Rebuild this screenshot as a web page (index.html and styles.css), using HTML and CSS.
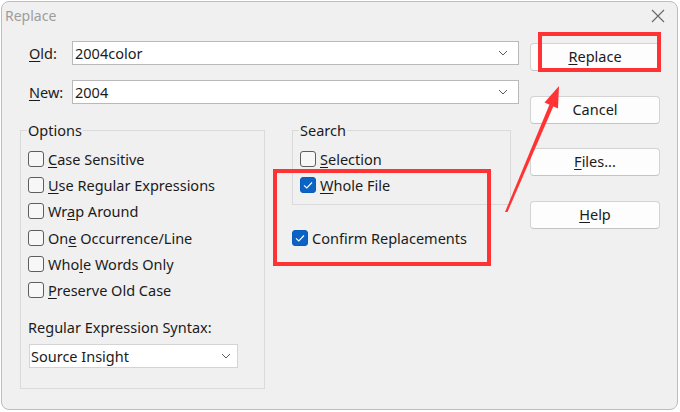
FILE: index.html
```html
<!DOCTYPE html>
<html lang="en">
<head>
    <meta charset="UTF-8">
    <meta name="viewport" content="width=device-width, initial-scale=1.0">
    <title>Replace</title>
    <link rel="stylesheet" href="styles.css">
</head>
<body>
    <div class="window">
        <div class="titlebar">
            <span class="title">Replace</span>
            <svg class="close" width="14" height="14" viewBox="0 0 14 14">
                <path d="M1 1 L13 13 M13 1 L1 13" stroke="#6b6b6b" stroke-width="1.2" fill="none"/>
            </svg>
        </div>

        <div class="dialog-body">
            <div class="main">
                <div class="field">
                    <label><u>O</u>ld:</label>
                    <div class="combo">
                        <span>2004color</span>
                        <svg class="chevron" width="10" height="6" viewBox="0 0 10 6"><path d="M1 1 L5 5 L9 1" stroke="#5c5c5c" stroke-width="1" fill="none"/></svg>
                    </div>
                </div>
                <div class="field">
                    <label><u>N</u>ew:</label>
                    <div class="combo">
                        <span>2004</span>
                        <svg class="chevron" width="10" height="6" viewBox="0 0 10 6"><path d="M1 1 L5 5 L9 1" stroke="#5c5c5c" stroke-width="1" fill="none"/></svg>
                    </div>
                </div>

                <div class="groups">
                    <fieldset class="options">
                        <legend>Options</legend>
                        <div class="check"><span class="box"></span><span><u>C</u>ase Sensitive</span></div>
                        <div class="check"><span class="box"></span><span><u>U</u>se Regular Expressions</span></div>
                        <div class="check"><span class="box"></span><span>Wr<u>a</u>p Around</span></div>
                        <div class="check"><span class="box"></span><span>On<u>e</u> Occurrence/Line</span></div>
                        <div class="check"><span class="box"></span><span>Who<u>l</u>e Words Only</span></div>
                        <div class="check"><span class="box"></span><span><u>P</u>reserve Old Case</span></div>
                        <div class="syntax-label">Re<u>g</u>ular Expression Syntax:</div>
                        <div class="select">
                            <span>Source Insight</span>
                            <svg class="chevron" width="10" height="6" viewBox="0 0 10 6"><path d="M1 1 L5 5 L9 1" stroke="#5c5c5c" stroke-width="1" fill="none"/></svg>
                        </div>
                    </fieldset>

                    <div class="search-col">
                        <fieldset class="search">
                            <legend>Search</legend>
                            <div class="check"><span class="box"></span><span><u>S</u>election</span></div>
                            <div class="check"><span class="box checked"></span><span><u>W</u>hole File</span></div>
                        </fieldset>
                        <div class="check confirm"><span class="box checked"></span><span>Conf<u>i</u>rm Replacements</span></div>
                    </div>
                </div>
            </div>

            <div class="buttons">
                <div class="btn"><u>R</u>eplace</div>
                <div class="btn">Cancel</div>
                <div class="btn"><u>F</u>iles...</div>
                <div class="btn"><u>H</u>elp</div>
            </div>
        </div>

        <!-- annotation marks drawn over the dialog -->
        <div class="mark mark-replace"></div>
        <div class="mark mark-checks"></div>
        <svg class="arrow" width="680" height="412" viewBox="0 0 680 412">
            <polygon points="505,212 507.5,212 553.5,106 549.5,104.5" fill="#ff3333"/>
            <polygon points="559,86 544.5,102.5 558,108.5" fill="#ff3333"/>
        </svg>
    </div>
</body>
</html>
```

FILE: styles.css
```css
body {
    margin: 0;
    background-color: #fff;
    font-family: "Noto Sans", "Open Sans", sans-serif;
    font-size: 14.5px;
    color: #1b1b1b;
}
u {
    text-underline-offset: 2px;
}
.window {
    position: relative;
    box-sizing: border-box;
    margin: 1px 0 0 1px;
    width: 677px;
    height: 409px;
    background-color: #f0f0f0;
    border: 1px solid #bdbdbd;
    border-radius: 8px;
    overflow: hidden;
}
.titlebar {
    display: flex;
    justify-content: space-between;
    align-items: center;
    height: 27px;
    padding: 0 12px 0 3px;
}
.title {
    font-size: 14px;
    color: #9d9d9d;
}
.dialog-body {
    display: flex;
    gap: 11px;
    padding: 12px 0 0 18px;
}
.main {
    width: 499px;
}
.field {
    display: flex;
    align-items: center;
    height: 24px;
    margin-bottom: 15px;
    padding-left: 9px;
}
.field label {
    width: 43px;
}
.combo, .select {
    box-sizing: border-box;
    display: flex;
    justify-content: space-between;
    align-items: center;
    height: 24px;
    background-color: #fff;
    border: 1px solid #b9b9b9;
    line-height: 20px;
}
.combo {
    width: 447px;
    padding: 0 10px 0 2px;
}
.select {
    width: 209px;
    margin-left: 1px;
    padding: 0 6px 0 1px;
    border-color: #d4d4d4;
}
.groups {
    display: flex;
    margin-top: 16px;
}
fieldset {
    box-sizing: border-box;
    margin: 0;
    min-width: 0;
    border: 1px solid #dadada;
}
legend {
    padding: 0 1px;
    line-height: 20px;
    margin-left: -1px;
}
.options {
    width: 245px;
    padding: 6px 7px 20px;
}
.search-col {
    width: 219px;
    margin-left: 27px;
}
.search {
    padding: 6px 7px 6px;
}
.check {
    display: flex;
    align-items: center;
    gap: 4px;
    height: 26.2px;
}
.confirm {
    margin-top: 20px;
}
.box {
    box-sizing: border-box;
    width: 16px;
    height: 16px;
    border: 1px solid #5e5e5e;
    border-radius: 3px;
    background-color: #f7f7f7;
}
.box.checked {
    border-color: #0b5cb8;
    background-color: #0b63c6;
    background-image: url("data:image/svg+xml,%3Csvg xmlns='http://www.w3.org/2000/svg' width='16' height='16'%3E%3Cpath d='M4 8.3 L6.8 11 L12 5.5' stroke='white' stroke-width='1.1' fill='none'/%3E%3C/svg%3E");
    background-position: -1px -1px;
}
.syntax-label {
    margin-top: 14px;
    height: 20px;
    line-height: 20px;
}
.select {
    margin-top: 7px;
}
.buttons {
    display: flex;
    flex-direction: column;
    gap: 24.6px;
    padding-top: 2px;
}
.btn {
    box-sizing: border-box;
    width: 130px;
    height: 28px;
    line-height: 25px;
    text-align: center;
    background-color: #fdfdfd;
    border: 1px solid #d3d3d3;
    border-bottom-color: #c4c4c4;
    border-radius: 4px;
}
.mark {
    position: absolute;
    box-sizing: border-box;
    border: 4px solid #ff3333;
}
.mark-replace {
    left: 536px;
    top: 30px;
    width: 123px;
    height: 40px;
}
.mark-checks {
    left: 271px;
    top: 167px;
    width: 218px;
    height: 97px;
}
.arrow {
    position: absolute;
    left: -2px;
    top: -2px;
}
```
